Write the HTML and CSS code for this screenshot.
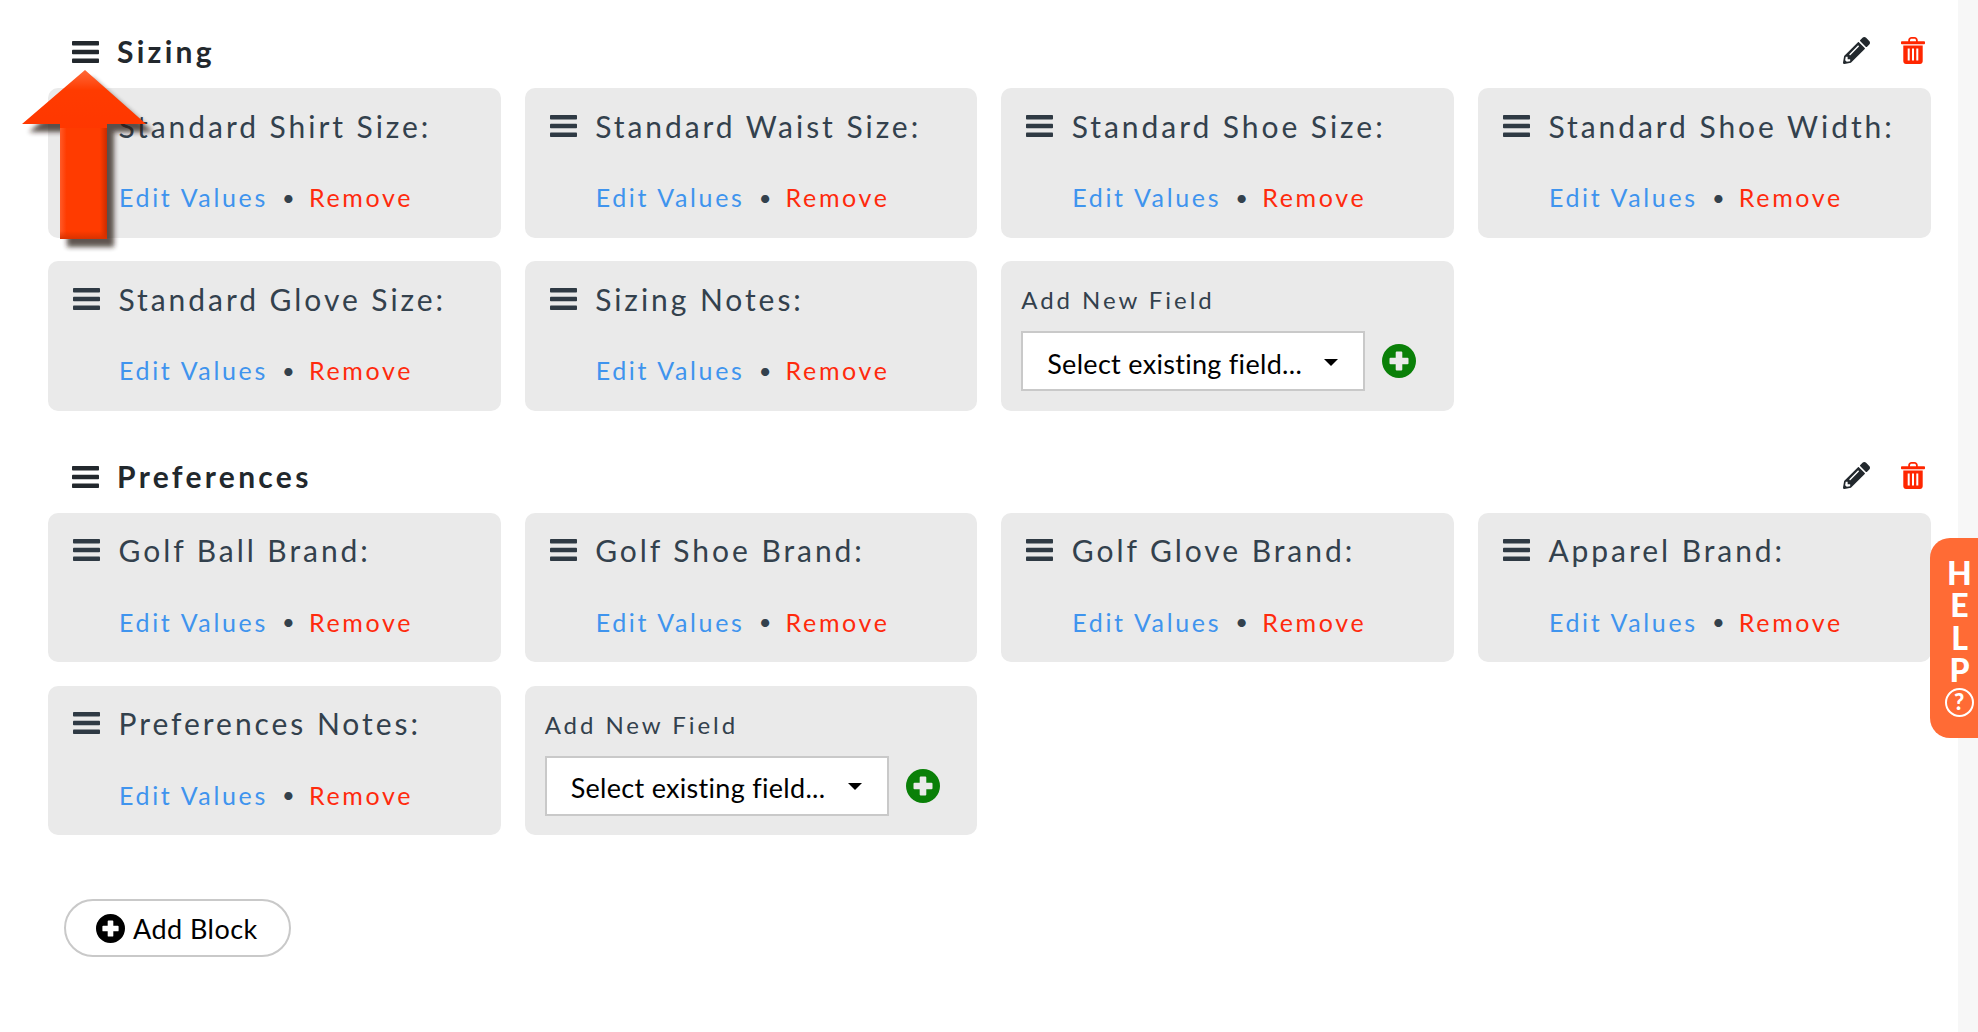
FILE: index.html
```html
<!DOCTYPE html>
<html lang="en">
<head>
<meta charset="utf-8">
<title>Profile fields</title>
<link rel="stylesheet" href="styles.css">
</head>
<body>
<svg class="defs" width="0" height="0" aria-hidden="true">
  <symbol id="bars" viewBox="0 0 27 22"><rect x="0" y="0" width="27" height="4.6" rx="0.8"/><rect x="0" y="8.7" width="27" height="4.6" rx="0.8"/><rect x="0" y="17.4" width="27" height="4.6" rx="0.8"/></symbol>
  <symbol id="plus" viewBox="0 0 34 34"><path fill-rule="evenodd" d="M17 0a17 17 0 1 1 0 34a17 17 0 0 1 0-34zM14.7 7.5a1 1 0 0 0-1 1v5.200H8.500a1 1 0 0 0-1 1v4.600a1 1 0 0 0 1 1h5.200v5.200a1 1 0 0 0 1 1h4.600a1 1 0 0 0 1-1v-5.200h5.200a1 1 0 0 0 1-1v-4.600a1 1 0 0 0-1-1h-5.200V8.500a1 1 0 0 0-1-1z"/></symbol>
  <symbol id="pencil" viewBox="0 0 512 512"><path d="M497.9 142.1l-46.1 46.1c-4.7 4.7-12.3 4.7-17 0l-111-111c-4.7-4.7-4.7-12.3 0-17l46.1-46.1c18.7-18.7 49.1-18.7 67.9 0l60.1 60.1c18.8 18.7 18.8 49.1 0 67.9zM284.2 99.8L21.6 362.4.4 483.9c-2.9 16.4 11.4 30.6 27.8 27.8l121.5-21.3 262.6-262.6c4.7-4.7 4.7-12.3 0-17l-111-111c-4.8-4.7-12.4-4.7-17.1 0zM124.1 339.9c-5.5-5.5-5.5-14.3 0-19.8l154-154c5.5-5.5 14.3-5.5 19.8 0s5.5 14.3 0 19.8l-154 154c-5.5 5.5-14.3 5.5-19.8 0zM88 424h48v36.3l-64.5 11.3-31.1-31.1L51.7 376H88v48z"/></symbol>
  <symbol id="trash" viewBox="0 0 24 27"><path fill-rule="evenodd" d="M7.2 4.2V3.4C7.2 1.5 8.7 0 10.6 0h2.8c1.900 0 3.400 1.500 3.400 3.400v.8h6.400c.4 0 .8.4.8.8v1.400c0 .4-.4.8-.8.8H.8C.4 7.200 0 6.800 0 6.400V5c0-.4.4-.8.8-.8zM9 4.200h6v-.8c0-.9-.7-1.600-1.600-1.600h-2.800c-.9 0-1.600.7-1.600 1.600zM2.300 8.500h19.400v15.800c0 1.500-1.200 2.700-2.700 2.700H5c-1.500 0-2.700-1.200-2.700-2.700zM6.700 11.500v12h2v-12zM11 11.500v12h2v-12zM15.300 11.500v12h2v-12z"/></symbol>
</svg>

<div class="page">
  <main class="content">
    <section class="block">
      <header class="block-head">
        <svg class="bars head-bars"><use href="#bars"/></svg>
        <h2 class="block-title">Sizing</h2>
        <svg class="tool pencil"><use href="#pencil"/></svg>
        <svg class="tool trash"><use href="#trash"/></svg>
      </header>
      <div class="fields">
        <div class="card"><div class="field-name"><svg class="bars"><use href="#bars"/></svg>Standard Shirt Size:</div><div class="links"><a class="edit">Edit Values</a><span class="dot">•</span><a class="remove">Remove</a></div></div>
        <div class="card"><div class="field-name"><svg class="bars"><use href="#bars"/></svg>Standard Waist Size:</div><div class="links"><a class="edit">Edit Values</a><span class="dot">•</span><a class="remove">Remove</a></div></div>
        <div class="card"><div class="field-name"><svg class="bars"><use href="#bars"/></svg>Standard Shoe Size:</div><div class="links"><a class="edit">Edit Values</a><span class="dot">•</span><a class="remove">Remove</a></div></div>
        <div class="card"><div class="field-name"><svg class="bars"><use href="#bars"/></svg>Standard Shoe Width:</div><div class="links"><a class="edit">Edit Values</a><span class="dot">•</span><a class="remove">Remove</a></div></div>
        <div class="card"><div class="field-name"><svg class="bars"><use href="#bars"/></svg>Standard Glove Size:</div><div class="links"><a class="edit">Edit Values</a><span class="dot">•</span><a class="remove">Remove</a></div></div>
        <div class="card"><div class="field-name"><svg class="bars"><use href="#bars"/></svg>Sizing Notes:</div><div class="links"><a class="edit">Edit Values</a><span class="dot">•</span><a class="remove">Remove</a></div></div>
        <div class="card add-card"><div class="add-label">Add New Field</div><div class="add-row"><div class="select"><span>Select existing field...</span><i class="caret"></i></div><svg class="add-plus"><use href="#plus"/></svg></div></div>
      </div>
    </section>

    <section class="block">
      <header class="block-head">
        <svg class="bars head-bars"><use href="#bars"/></svg>
        <h2 class="block-title">Preferences</h2>
        <svg class="tool pencil"><use href="#pencil"/></svg>
        <svg class="tool trash"><use href="#trash"/></svg>
      </header>
      <div class="fields">
        <div class="card"><div class="field-name"><svg class="bars"><use href="#bars"/></svg>Golf Ball Brand:</div><div class="links"><a class="edit">Edit Values</a><span class="dot">•</span><a class="remove">Remove</a></div></div>
        <div class="card"><div class="field-name"><svg class="bars"><use href="#bars"/></svg>Golf Shoe Brand:</div><div class="links"><a class="edit">Edit Values</a><span class="dot">•</span><a class="remove">Remove</a></div></div>
        <div class="card"><div class="field-name"><svg class="bars"><use href="#bars"/></svg>Golf Glove Brand:</div><div class="links"><a class="edit">Edit Values</a><span class="dot">•</span><a class="remove">Remove</a></div></div>
        <div class="card"><div class="field-name"><svg class="bars"><use href="#bars"/></svg>Apparel Brand:</div><div class="links"><a class="edit">Edit Values</a><span class="dot">•</span><a class="remove">Remove</a></div></div>
        <div class="card"><div class="field-name"><svg class="bars"><use href="#bars"/></svg>Preferences Notes:</div><div class="links"><a class="edit">Edit Values</a><span class="dot">•</span><a class="remove">Remove</a></div></div>
        <div class="card add-card"><div class="add-label">Add New Field</div><div class="add-row"><div class="select"><span>Select existing field...</span><i class="caret"></i></div><svg class="add-plus"><use href="#plus"/></svg></div></div>
      </div>
    </section>

    <button class="add-block"><svg class="add-block-icon"><use href="#plus"/></svg>Add Block</button>
  </main>
  <div class="scroll-track"></div>
</div>

<aside class="help">
  <span class="help-word">HELP</span>
  <span class="help-q">?</span>
</aside>

<svg class="arrow" width="170" height="200" viewBox="0 0 170 200" aria-hidden="true">
  <defs>
    <linearGradient id="shaft" x1="0" x2="1" y1="0" y2="0">
      <stop offset="0" stop-color="#ff5a28"/><stop offset=".14" stop-color="#ff3b00"/><stop offset=".85" stop-color="#ff3b00"/><stop offset="1" stop-color="#c92c00"/>
    </linearGradient>
    <linearGradient id="head" x1="0" x2="0" y1="0" y2="1">
      <stop offset="0" stop-color="#ff6a3a"/><stop offset=".35" stop-color="#ff3b00"/><stop offset="1" stop-color="#ff3700"/>
    </linearGradient>
    <linearGradient id="shaft-foot" x1="0" x2="0" y1="0" y2="1">
      <stop offset="0" stop-color="#d93200" stop-opacity="0"/><stop offset="1" stop-color="#d93200"/>
    </linearGradient>
    <filter id="arrow-shadow" x="-20%" y="-20%" width="150%" height="150%">
      <feGaussianBlur stdDeviation="2.500"/>
    </filter>
  </defs>
  <path d="M63 0L124 54H85V169H38V54H0z" transform="translate(7 8)" fill="#2a1a12" opacity=".75" filter="url(#arrow-shadow)"/>
  <path d="M38 54H85V169H38z" fill="url(#shaft)"/>
  <rect x="38" y="161" width="47" height="8" fill="url(#shaft-foot)"/>
  <path d="M63 0L124 54H85V58H38V54H0z" fill="url(#head)"/>
</svg>
</body>
</html>
```

FILE: styles.css
```css
* { box-sizing: border-box; }
html, body { margin: 0; height: 100%; overflow: hidden; background: #fff; }
body { font-family: Lato, "Open Sans", sans-serif; color: #33414d; }
.defs { position: absolute; }

.page { display: flex; height: 1032px; }
.content { flex: 1; padding: 27px 27.500px 0 48px; }
.scroll-track { width: 20px; background: #f7f7f7; }

.block { margin-bottom: 41px; }
.block-head { display: flex; align-items: center; height: 50px; margin-bottom: 11px; padding-left: 24px; }
.bars { width: 27px; height: 22px; flex: none; fill: #2f3a44; }
.head-bars { fill: #22282d; }
.block-title { flex: 1; margin: 0 0 2px 18px; font-size: 30px; font-weight: 700; letter-spacing: 3.300px; color: #22282d; }
.tool { flex: none; margin-bottom: 3px; }
.pencil { width: 27px; height: 27px; fill: #22282d; margin-right: 31px; }
.trash { width: 24px; height: 27px; fill: #ff2600; margin-right: 6px; }

.fields { display: grid; grid-template-columns: repeat(4, 1fr); column-gap: 24px; row-gap: 23.500px; }
.card { height: 149.500px; padding: 18px 0 0 25px; background: #eaeaea; border-radius: 10px; }
.field-name { display: flex; align-items: center; height: 39px; font-size: 30px; letter-spacing: 2.950px; white-space: nowrap; color: #33414d; }
.field-name .bars { margin-right: 18.500px; }
.links { display: flex; align-items: center; height: 36px; margin-top: 34px; padding-left: 46px; font-size: 25px; letter-spacing: 2.650px; }
.edit { color: #3f94ee; }
.remove { color: #ff2a0d; }
.dot { width: 41px; text-align: center; font-size: 22px; color: #33414d; letter-spacing: 0; }

.add-card { padding: 18px 0 0 20px; }
.add-label { height: 40px; line-height: 42px; font-size: 24px; letter-spacing: 2.950px; color: #33414d; }
.add-row { display: flex; align-items: center; margin-top: 12px; }
.select { display: flex; align-items: center; justify-content: space-between; width: 344px; height: 60px; padding: 4px 25px 0 24px; background: #fff; border: 2px solid #c9c9c9; font-size: 27px; letter-spacing: .3px; color: #000; }
.caret { width: 0; height: 0; margin-top: -2px; border-left: 7.500px solid transparent; border-right: 7.500px solid transparent; border-top: 7.500px solid #000; }
.add-plus { width: 34px; height: 34px; margin-left: 17px; fill: #0a8008; }

.add-block { display: flex; align-items: center; width: 227px; height: 58px; margin: 23px 0 0 16px; padding: 0 0 0 30px; background: #fff; border: 2px solid #c9c9c9; border-radius: 29px; font-family: inherit; font-size: 27px; letter-spacing: .45px; color: #000; }
.block:nth-of-type(2) { margin-bottom: 64px; }
.add-block-icon { width: 29px; height: 29px; margin-right: 8px; fill: #000; }

.help { position: absolute; left: 1930px; top: 538px; width: 48px; height: 200px; padding: 15px 0 0 10px; display: flex; flex-direction: column; align-items: center; border-radius: 20px 0 0 20px; background: #ff6b35; color: #fff; }
.help-word { height: 132px; writing-mode: vertical-rl; text-orientation: upright; font-size: 32px; font-weight: 900; line-height: 32px; letter-spacing: -6.700px; white-space: nowrap; }
.help-q { flex: none; width: 29px; height: 29px; margin-top: 3px; border: 2.500px solid #fff; border-radius: 50%; font-size: 22px; font-weight: 900; line-height: 24px; text-align: center; }

.arrow { position: absolute; left: 22px; top: 70px; }
```
